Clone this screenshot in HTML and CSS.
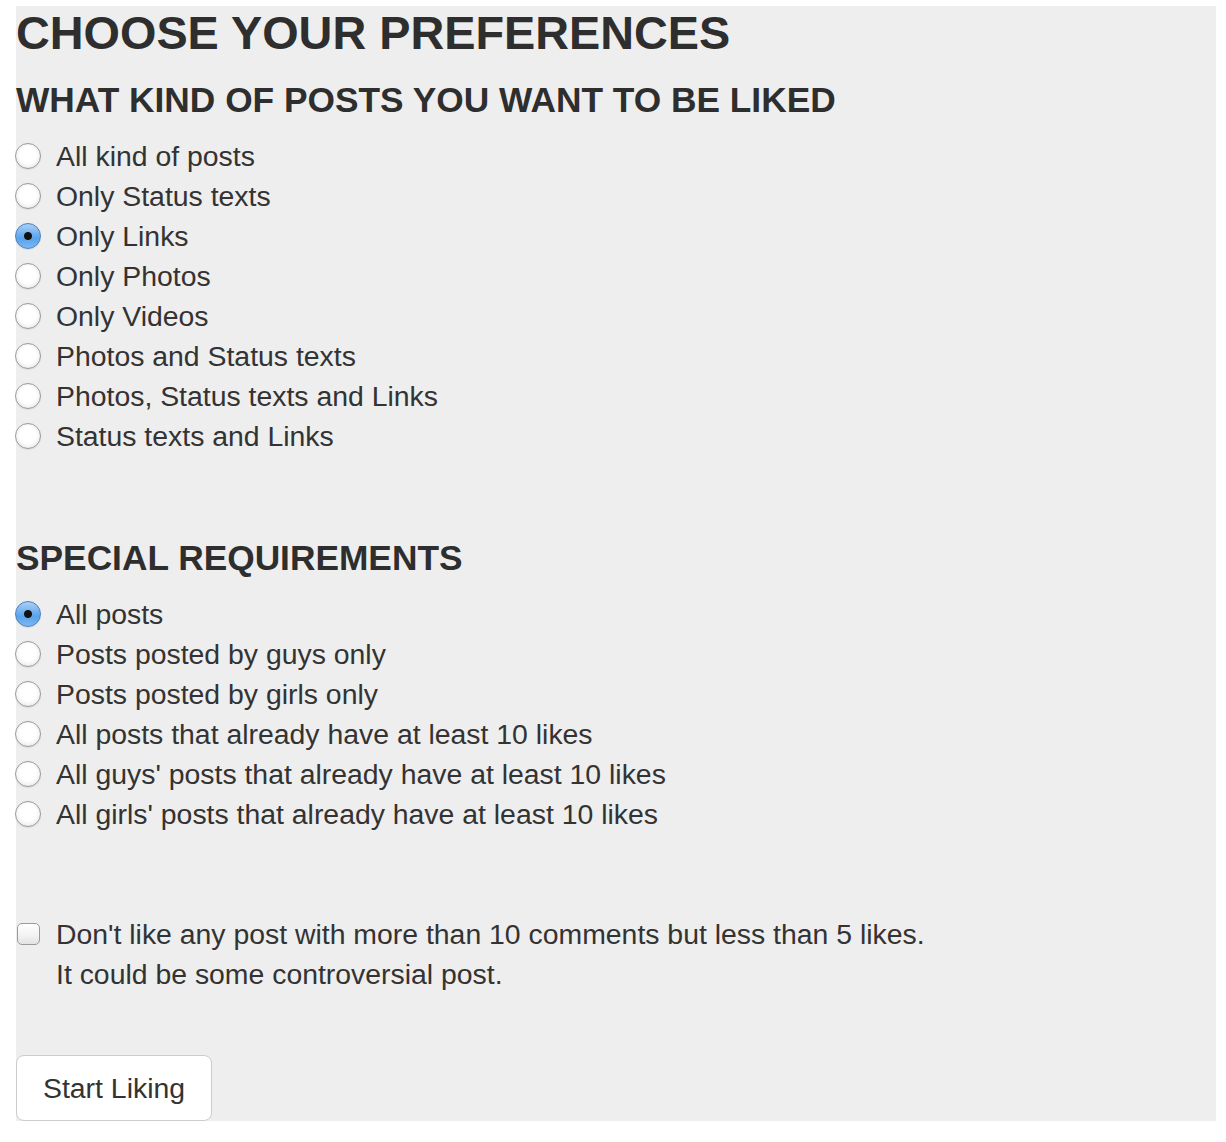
FILE: index.html
```html
<!DOCTYPE html>
<html lang="en">
<head>
  <meta charset="UTF-8">
  <title>Choose Your Preferences</title>
  <link rel="stylesheet" href="styles.css">
</head>
<body>

  <div class="panel">
    <h1>CHOOSE YOUR PREFERENCES</h1>
    <h2>WHAT KIND OF POSTS YOU WANT TO BE LIKED</h2>

    <div class="options">
      <label class="option"><input type="radio" name="kind"> All kind of posts</label>
      <label class="option"><input type="radio" name="kind"> Only Status texts</label>
      <label class="option"><input type="radio" name="kind" checked> Only Links</label>
      <label class="option"><input type="radio" name="kind"> Only Photos</label>
      <label class="option"><input type="radio" name="kind"> Only Videos</label>
      <label class="option"><input type="radio" name="kind"> Photos and Status texts</label>
      <label class="option"><input type="radio" name="kind"> Photos, Status texts and Links</label>
      <label class="option"><input type="radio" name="kind"> Status texts and Links</label>
    </div>

    <h2 class="section-title">SPECIAL REQUIREMENTS</h2>

    <div class="options">
      <label class="option"><input type="radio" name="special" checked> All posts</label>
      <label class="option"><input type="radio" name="special"> Posts posted by guys only</label>
      <label class="option"><input type="radio" name="special"> Posts posted by girls only</label>
      <label class="option"><input type="radio" name="special"> All posts that already have at least 10 likes</label>
      <label class="option"><input type="radio" name="special"> All guys' posts that already have at least 10 likes</label>
      <label class="option"><input type="radio" name="special"> All girls' posts that already have at least 10 likes</label>
    </div>

    <label class="check-option">
      <input type="checkbox">
      <span>Don't like any post with more than 10 comments but less than 5 likes.<br>It could be some controversial post.</span>
    </label>

    <button class="btn" id="startBtn">Start Liking</button>
  </div>

</body>
</html>
```

FILE: styles.css
```css
body {
  margin: 0;
  font-family: "Liberation Sans", Arial, sans-serif;
  color: #333;
  background: #fff;
}

.panel {
  margin: 6px 10px 0 16px;
  padding-top: 1px;
  background: #eee;
}

h1 {
  margin: 0;
  font-size: 46.8px;
  line-height: 52px;
  font-weight: bold;
  color: #2e2e2e;
}

h2 {
  margin: 21px 0 16px;
  font-size: 35.3px;
  line-height: 40px;
  font-weight: bold;
  color: #2e2e2e;
}

.section-title {
  margin-top: 82px;
}

.options {
  display: flex;
  flex-direction: column;
}

.option,
.check-option {
  display: flex;
  align-items: flex-start;
  gap: 15px;
  font-size: 28.4px;
  line-height: 40px;
}

.option input[type="radio"] {
  appearance: none;
  -webkit-appearance: none;
  flex: none;
  width: 26px;
  height: 26px;
  margin: 7px 0 0 -1px;
  border: 1px solid #9a9a9a;
  border-radius: 50%;
  background: radial-gradient(circle at 50% 45%, #fff 45%, #f0f0f0 70%, #d8d8d8 100%);
  box-shadow: 0 1px 1px rgba(0, 0, 0, 0.08);
}

.option input[type="radio"]:checked {
  border-color: #4a7fc0;
  background:
    radial-gradient(circle, #111 0 3.5px, transparent 4.5px),
    linear-gradient(#a9d0f5, #5aa2ea 60%, #7bb8f2);
}

.check-option {
  gap: 16px;
  margin-top: 80px;
}

.check-option input[type="checkbox"] {
  appearance: none;
  -webkit-appearance: none;
  flex: none;
  width: 23px;
  height: 22px;
  margin: 9px 0 0 1px;
  border: 1px solid #9a9a9a;
  border-radius: 5px;
  background: linear-gradient(#fff, #f2f2f2 60%, #e2e2e2);
}

.btn {
  display: block;
  margin-top: 61px;
  padding: 12px 26px;
  font-family: inherit;
  font-size: 28.4px;
  line-height: 40px;
  color: #333;
  background: #fff;
  border: 1px solid #ccc;
  border-radius: 8px;
  cursor: pointer;
}
```
